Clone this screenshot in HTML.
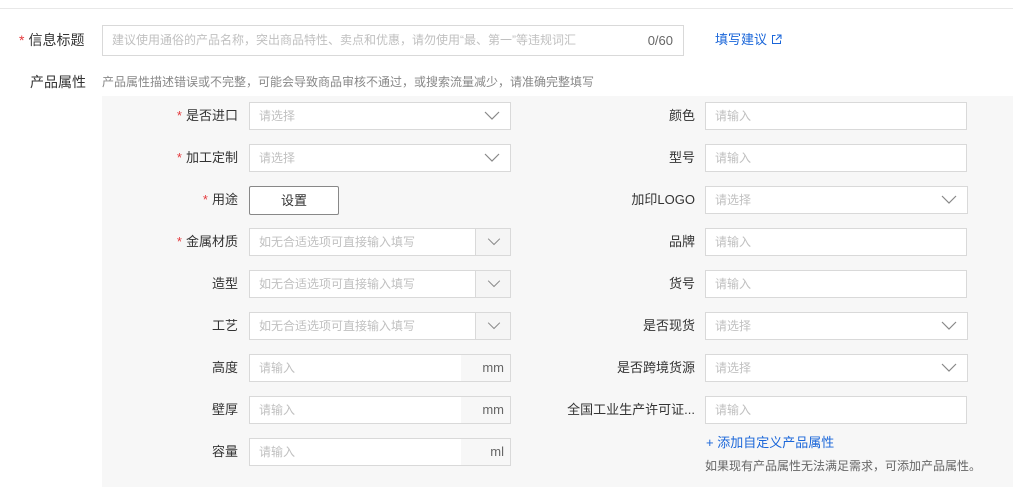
<!DOCTYPE html>
<html><head><meta charset="utf-8"><style>
*{box-sizing:border-box;margin:0;padding:0}
body{width:1013px;height:491px;background:#fff;font-family:"Liberation Sans","Noto Sans CJK SC",sans-serif;position:relative;overflow:hidden;color:#333}
.a{position:absolute}
.line{left:0;top:8px;width:1013px;height:1px;background:#e8e8e8}
.panel{left:102px;top:96px;width:911px;height:391px;background:#f7f7f7}
.lbl{font-size:13px;color:#333;text-align:right;width:180px;line-height:28px;white-space:nowrap}
.st{color:#e4393c;margin-right:4px}
.in{height:28px;background:#fff;border:1px solid #d9d9d9;font-size:12px;color:#c0c0c0;line-height:26px;padding-left:9px}
.arr{position:absolute;right:9px;top:6px;width:18px;height:12px}
.add{position:absolute;right:0;top:0;bottom:0;width:35px;background:#f5f5f5;border-left:1px solid #d9d9d9}
.add svg{position:absolute;left:11px;top:8px}
.unit{position:absolute;right:0;top:0;bottom:0;width:49px;background:#f7f7f7;color:#666;font-size:13px;text-align:right;padding-right:6px}
</style></head><body>
<div class="a line"></div>
<div class="a" style="left:19px;top:30px;font-size:14px;line-height:20px"><span class="st">*</span>信息标题</div>
<div class="a in" style="left:102px;top:25px;width:582px;height:31px;line-height:29px;font-size:12px">建议使用通俗的产品名称，突出商品特性、卖点和优惠，请勿使用“最、第一”等违规词汇<span style="position:absolute;right:10px;color:#666;font-size:13px">0/60</span></div>
<div class="a" style="left:715px;top:31px;font-size:13px;color:#1a66d9;line-height:18px">填写建议 <svg width="11" height="11" viewBox="0 0 11 11" style="vertical-align:-1px"><path d="M4.5 1.5H1.5v8h8V6.5M6 1h4v4M10 1L5 6" fill="none" stroke="#1a66d9" stroke-width="1"/></svg></div>
<div class="a" style="left:30px;top:72px;font-size:14px;line-height:20px">产品属性</div>
<div class="a" style="left:102px;top:74px;font-size:12px;color:#888;line-height:16px">产品属性描述错误或不完整，可能会导致商品审核不通过，或搜索流量减少，请准确完整填写</div>
<div class="a panel"></div>

<div class="a lbl" style="left:58px;top:102px"><span class="st">*</span>是否进口</div>
<div class="a in" style="left:249px;top:102px;width:262px">请选择<svg class="arr" viewBox="0 0 16 12"><path d="M1 3l7 7 7-7" fill="none" stroke="#888" stroke-width="1.2"/></svg></div>
<div class="a lbl" style="left:58px;top:144px"><span class="st">*</span>加工定制</div>
<div class="a in" style="left:249px;top:144px;width:262px">请选择<svg class="arr" viewBox="0 0 16 12"><path d="M1 3l7 7 7-7" fill="none" stroke="#888" stroke-width="1.2"/></svg></div>
<div class="a lbl" style="left:58px;top:186px"><span class="st">*</span>用途</div>
<div class="a" style="left:249px;top:186px;width:90px;height:29px;background:#fff;border:1px solid #888;border-radius:2px;font-size:13px;text-align:center;line-height:27px;color:#333">设置</div>
<div class="a lbl" style="left:58px;top:228px"><span class="st">*</span>金属材质</div>
<div class="a in" style="left:249px;top:228px;width:262px">如无合适选项可直接输入填写<div class="add"><svg width="14" height="10" viewBox="0 0 16 12"><path d="M1 2l7 7 7-7" fill="none" stroke="#888" stroke-width="1.2"/></svg></div></div>
<div class="a lbl" style="left:58px;top:270px">造型</div>
<div class="a in" style="left:249px;top:270px;width:262px">如无合适选项可直接输入填写<div class="add"><svg width="14" height="10" viewBox="0 0 16 12"><path d="M1 2l7 7 7-7" fill="none" stroke="#888" stroke-width="1.2"/></svg></div></div>
<div class="a lbl" style="left:58px;top:312px">工艺</div>
<div class="a in" style="left:249px;top:312px;width:262px">如无合适选项可直接输入填写<div class="add"><svg width="14" height="10" viewBox="0 0 16 12"><path d="M1 2l7 7 7-7" fill="none" stroke="#888" stroke-width="1.2"/></svg></div></div>
<div class="a lbl" style="left:58px;top:354px">高度</div>
<div class="a in" style="left:249px;top:354px;width:262px">请输入<div class="unit">mm</div></div>
<div class="a lbl" style="left:58px;top:396px">壁厚</div>
<div class="a in" style="left:249px;top:396px;width:262px">请输入<div class="unit">mm</div></div>
<div class="a lbl" style="left:58px;top:438px">容量</div>
<div class="a in" style="left:249px;top:438px;width:262px">请输入<div class="unit">ml</div></div>

<div class="a lbl" style="left:515px;top:102px">颜色</div>
<div class="a in" style="left:705px;top:102px;width:262px">请输入</div>
<div class="a lbl" style="left:515px;top:144px">型号</div>
<div class="a in" style="left:705px;top:144px;width:262px">请输入</div>
<div class="a lbl" style="left:515px;top:186px">加印LOGO</div>
<div class="a in" style="left:705px;top:186px;width:263px">请选择<svg class="arr" viewBox="0 0 16 12"><path d="M1 3l7 7 7-7" fill="none" stroke="#888" stroke-width="1.2"/></svg></div>
<div class="a lbl" style="left:515px;top:228px">品牌</div>
<div class="a in" style="left:705px;top:228px;width:262px">请输入</div>
<div class="a lbl" style="left:515px;top:270px">货号</div>
<div class="a in" style="left:705px;top:270px;width:262px">请输入</div>
<div class="a lbl" style="left:515px;top:312px">是否现货</div>
<div class="a in" style="left:705px;top:312px;width:263px">请选择<svg class="arr" viewBox="0 0 16 12"><path d="M1 3l7 7 7-7" fill="none" stroke="#888" stroke-width="1.2"/></svg></div>
<div class="a lbl" style="left:515px;top:354px">是否跨境货源</div>
<div class="a in" style="left:705px;top:354px;width:263px">请选择<svg class="arr" viewBox="0 0 16 12"><path d="M1 3l7 7 7-7" fill="none" stroke="#888" stroke-width="1.2"/></svg></div>
<div class="a lbl" style="left:515px;top:396px">全国工业生产许可证...</div>
<div class="a in" style="left:705px;top:396px;width:262px">请输入</div>
<div class="a" style="left:706px;top:434px;font-size:13px;color:#1a66d9;line-height:18px">+ 添加自定义产品属性</div>
<div class="a" style="left:705px;top:457px;font-size:12px;color:#666;line-height:18px;white-space:nowrap">如果现有产品属性无法满足需求，可添加产品属性。</div>
</body></html>
